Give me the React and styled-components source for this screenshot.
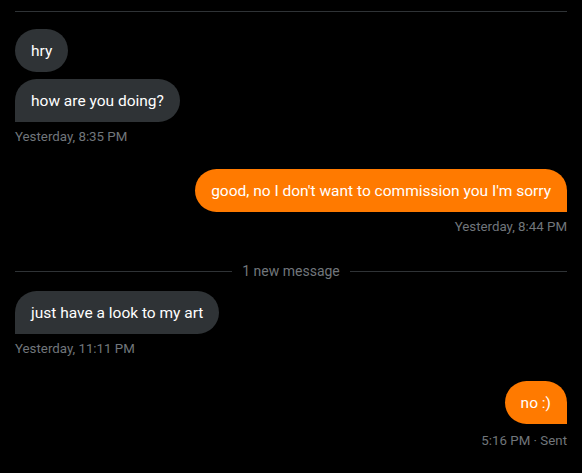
import React from 'react'
import styled, { createGlobalStyle } from "styled-components";

const GlobalStyle = createGlobalStyle`
  html, body {
    margin: 0;
    padding: 0;
    background: #000;
  }
  body {
    font-family: "Segoe UI", Roboto, "Liberation Sans", sans-serif;
    color: #e7e9ea;
  }
`;

const Thread = styled.div`
  width: 582px;
  height: 473px;
  box-sizing: border-box;
  padding: 11px 15px 0;
  display: flex;
  flex-direction: column;
  overflow: hidden;
`;

const TopRule = styled.div`
  height: 1px;
  background: #2f3336;
  margin-bottom: 17px;
`;

const Group = styled.div`
  display: flex;
  flex-direction: column;
  align-items: ${(p) => (p.$mine ? "flex-end" : "flex-start")};
  gap: 7px;
  margin-bottom: ${(p) => p.$after || 0}px;
`;

const Bubble = styled.div`
  padding: 12px 16px 11px;
  font-size: 15.5px;
  line-height: 20px;
  border-radius: 22px;
  background: ${(p) => (p.$mine ? "#ff7a00" : "#2f3336")};
  color: #fff;
  white-space: nowrap;
  ${(p) =>
    p.$last && (p.$mine ? "border-bottom-right-radius: 0;" : "border-bottom-left-radius: 0;")}
`;

const Stamp = styled.div`
  font-size: 13.3px;
  line-height: 16px;
  color: #71767b;
  margin-top: ${(p) => p.$shift || 0}px;
`;

const Divider = styled.div`
  display: flex;
  align-items: center;
  gap: 10px;
  height: 20px;
  font-size: 14px;
  color: #71767b;
  margin-bottom: 10px;

  &::before,
  &::after {
    content: "";
    flex: 1;
    height: 1px;
    background: #2f3336;
  }
`;

const App = () => {
  return (
    <>
      <GlobalStyle />
      <Thread>
        <TopRule />
        <Group $after={24}>
          <Bubble>hry</Bubble>
          <Bubble $last>how are you doing?</Bubble>
          <Stamp>Yesterday, 8:35 PM</Stamp>
        </Group>
        <Group $mine $after={26}>
          <Bubble $mine $last>good, no I don't want to commission you I'm sorry</Bubble>
          <Stamp>Yesterday, 8:44 PM</Stamp>
        </Group>
        <Divider>1 new message</Divider>
        <Group $after={24}>
          <Bubble $last>just have a look to my art</Bubble>
          <Stamp>Yesterday, 11:11 PM</Stamp>
        </Group>
        <Group $mine>
          <Bubble $mine $last>no :)</Bubble>
          <Stamp $shift={2}>5:16 PM · Sent</Stamp>
        </Group>
      </Thread>
    </>
  )
}

export default App
